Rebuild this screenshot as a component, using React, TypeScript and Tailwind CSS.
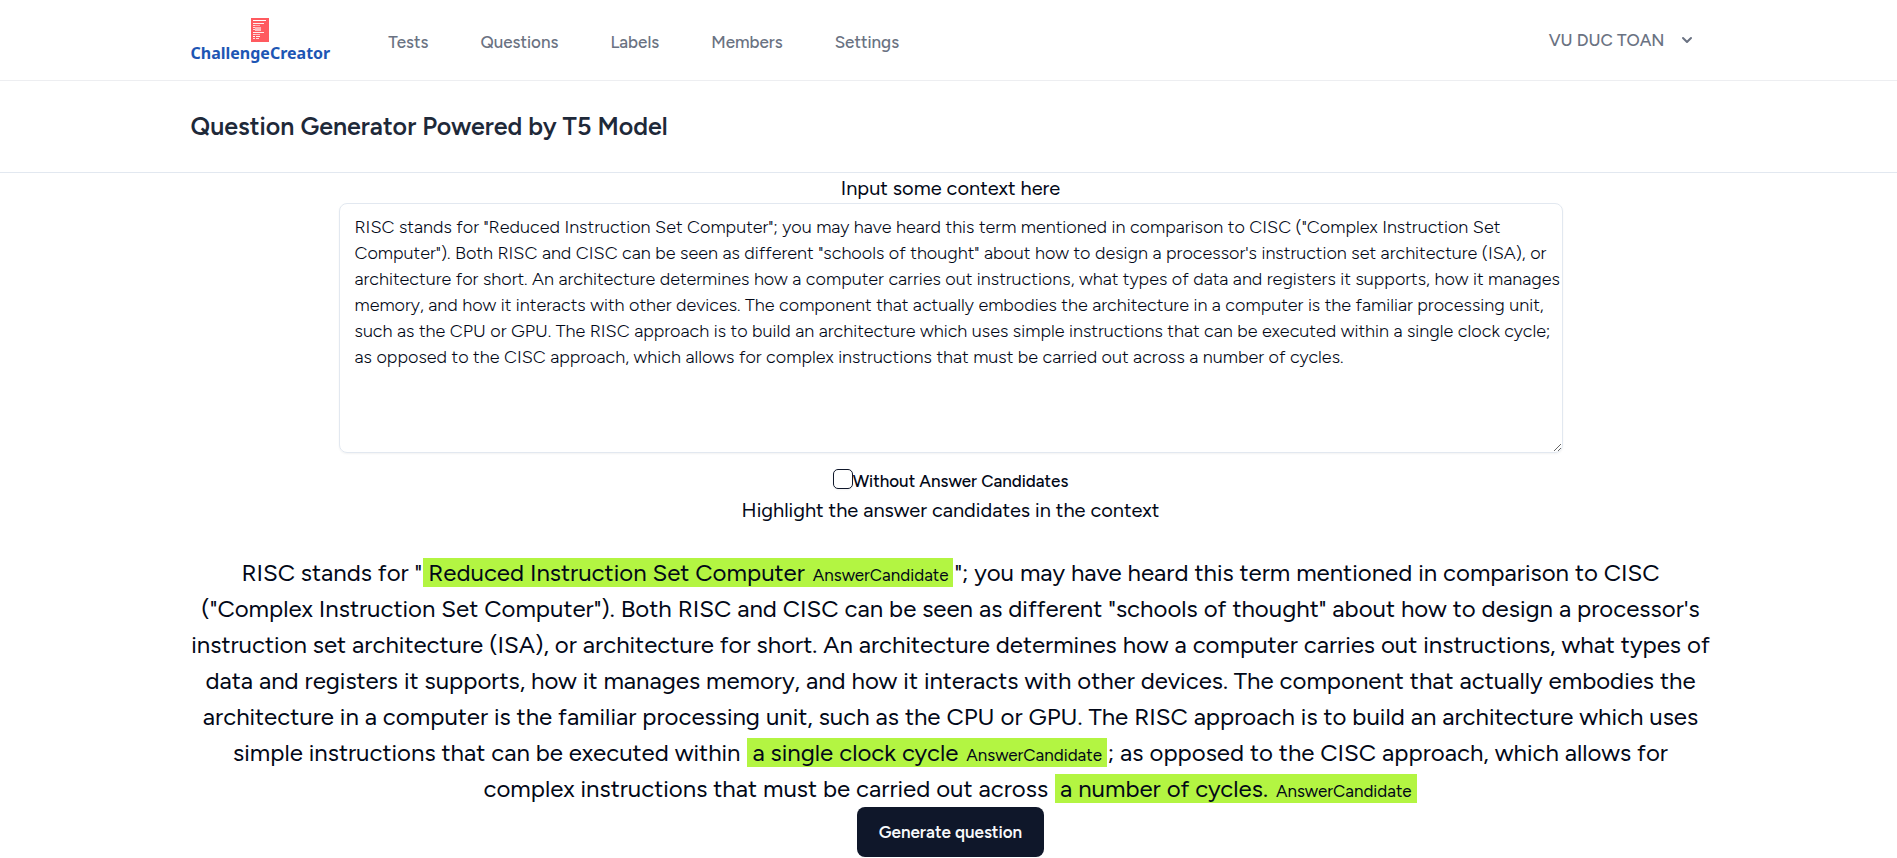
import { useState } from 'react';

const NAV_ITEMS = ['Tests', 'Questions', 'Labels', 'Members', 'Settings'];

const CONTEXT_LINES = [
  'RISC stands for "Reduced Instruction Set Computer"; you may have heard this term mentioned in comparison to CISC ("Complex Instruction Set',
  'Computer"). Both RISC and CISC can be seen as different "schools of thought" about how to design a processor\'s instruction set architecture (ISA), or',
  'architecture for short. An architecture determines how a computer carries out instructions, what types of data and registers it supports, how it manages',
  'memory, and how it interacts with other devices. The component that actually embodies the architecture in a computer is the familiar processing unit,',
  'such as the CPU or GPU. The RISC approach is to build an architecture which uses simple instructions that can be executed within a single clock cycle;',
  'as opposed to the CISC approach, which allows for complex instructions that must be carried out across a number of cycles.',
];

function Logo() {
  return (
    <a href="#" className="flex flex-col items-center pt-0.5" aria-label="ChallengeCreator">
      <svg width="18" height="24" viewBox="0 0 18 24" aria-hidden="true">
        <rect width="18" height="24" fill="#ff5a5f" />
        <g fill="#fff">
          <rect x="2" y="2" width="13" height="1" />
          <rect x="2" y="5" width="11" height="1" opacity=".9" />
          <rect x="2" y="7" width="2" height="1" opacity=".8" />
          <rect x="4" y="7" width="5" height="1" opacity=".5" />
          <rect x="2" y="9" width="2" height="1" opacity=".8" />
          <rect x="4" y="9" width="6" height="2" opacity=".55" />
          <rect x="2" y="11" width="2" height="1" opacity=".8" />
          <rect x="4" y="11" width="6" height="2" opacity=".6" />
          <rect x="2" y="14" width="11" height="1" opacity=".9" />
          <rect x="2" y="16" width="2" height="1" opacity=".8" />
          <rect x="4" y="16" width="5" height="1" opacity=".6" />
          <rect x="2" y="18" width="2" height="1" />
          <rect x="5" y="18" width="4" height="1" opacity=".9" />
          <rect x="2" y="20" width="2" height="1" opacity=".8" />
          <rect x="5" y="20" width="3" height="1" opacity=".8" />
        </g>
      </svg>
      <span className="font-['Noto_Sans',sans-serif] text-[16px] leading-[22px] font-bold text-[#1d56b4]">
        ChallengeCreator
      </span>
    </a>
  );
}

function Candidate({ children }: { children: string }) {
  return (
    <mark className="mx-px bg-[#b3f542] px-[5px] text-inherit">
      {children}
      <span className="ml-2 text-[17px] leading-none">AnswerCandidate</span>
    </mark>
  );
}

export default function App() {
  const [context, setContext] = useState(CONTEXT_LINES.join('\n'));
  const [without, setWithout] = useState(false);

  return (
    <div className="min-h-screen bg-white font-['Figtree','Lato',sans-serif] text-[#020817]">
      <nav className="border-b border-[#edeef1] pl-1">
        <div className="mx-auto flex h-20 max-w-[1600px] items-center px-10">
          <Logo />
          <div className="ml-[58px] flex flex-1 gap-[52px] pt-1 text-[17px] leading-6 font-medium text-gray-500">
            {NAV_ITEMS.map((item) => (
              <a key={item} href="#">
                {item}
              </a>
            ))}
          </div>
          <button
            type="button"
            className="flex items-center gap-3 pr-[14px] text-[17px] leading-6 font-medium text-gray-500"
          >
            VU DUC TOAN
            <svg width="20" height="20" viewBox="0 0 20 20" fill="currentColor" aria-hidden="true">
              <path
                fillRule="evenodd"
                clipRule="evenodd"
                d="M5.293 7.293a1 1 0 011.414 0L10 10.586l3.293-3.293a1 1 0 111.414 1.414l-4 4a1 1 0 01-1.414 0l-4-4a1 1 0 010-1.414z"
              />
            </svg>
          </button>
        </div>
      </nav>

      <header className="border-b border-[#e2e8f0] pl-1">
        <div className="mx-auto max-w-[1600px] px-10 py-[30px]">
          <h1 className="text-[25px] leading-[31px] font-semibold text-gray-800">
            Question Generator Powered by T5 Model
          </h1>
        </div>
      </header>

      <main className="pl-1">
        <div className="mx-auto flex max-w-[1600px] flex-col items-center px-[35px]">
          <label htmlFor="context" className="text-[20px] leading-[30px]">
            Input some context here
          </label>
          <textarea
            id="context"
            value={context}
            onChange={(e) => setContext(e.target.value)}
            className="h-[250px] w-4/5 rounded-lg border border-[#e2e8f0] py-[10px] pr-0 pl-[15px] text-[18px] leading-[26px] font-light shadow-xs"
          />
          <div className="flex items-center pt-3 pb-[2px]">
            <input
              id="without"
              type="checkbox"
              checked={without}
              onChange={(e) => setWithout(e.target.checked)}
              className="size-5 appearance-none rounded-[5px] border border-[#0f172a] shadow-xs checked:bg-[#0f172a]"
            />
            <label htmlFor="without" className="pt-1 text-[17px] leading-6 font-medium">
              Without Answer Candidates
            </label>
          </div>
          <p className="text-[20px] leading-[30px]">Highlight the answer candidates in the context</p>
          <p className="pt-[30px] text-center text-[24px] leading-9">
            RISC stands for "<Candidate>Reduced Instruction Set Computer</Candidate>"; you may have heard this term
            mentioned in comparison to CISC ("Complex Instruction Set Computer"). Both RISC and CISC can be seen as
            different "schools of thought" about how to design a processor's instruction set architecture (ISA), or
            architecture for short. An architecture determines how a computer carries out instructions, what types of
            data and registers it supports, how it manages memory, and how it interacts with other devices. The
            component that actually embodies the architecture in a computer is the familiar processing unit, such as
            the CPU or GPU. The RISC approach is to build an architecture which uses simple instructions that can be
            executed within <Candidate>a single clock cycle</Candidate>; as opposed to the CISC approach, which allows
            for complex instructions that must be carried out across <Candidate>a number of cycles.</Candidate>
          </p>
          <button
            type="button"
            className="h-[50px] rounded-lg bg-[#0f172a] px-[22px] text-[17px] leading-6 font-semibold text-slate-50"
          >
            Generate question
          </button>
        </div>
      </main>
    </div>
  );
}
